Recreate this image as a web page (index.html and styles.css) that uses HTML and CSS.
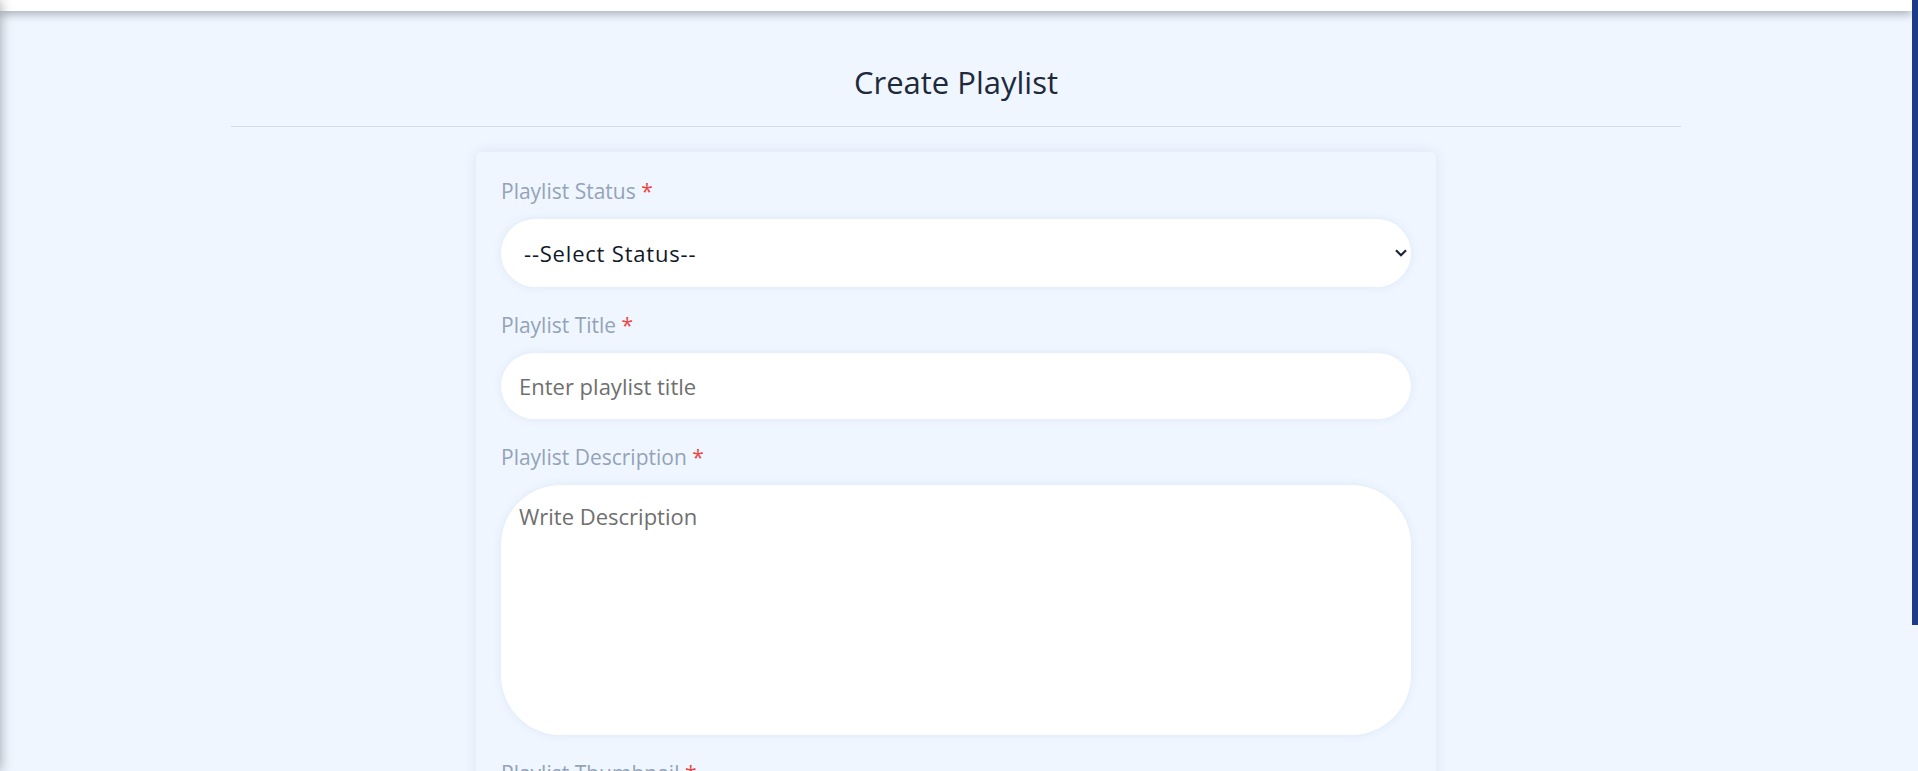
FILE: index.html
```html
<!DOCTYPE html>
<html lang="en">
<head>
<meta charset="utf-8">
<title>Create Playlist</title>
<link rel="stylesheet" href="styles.css">
</head>
<body>
<aside class="sidebar"></aside>
<div class="scroll-thumb"></div>
<header class="topbar"></header>
<main class="page">
  <div class="page-head">
    <h1 class="page-title">Create Playlist</h1>
  </div>
  <form class="card">
    <div class="field">
      <label class="field-label">Playlist Status <span class="req">*</span></label>
      <div class="select-wrap">
        <select class="control control-select">
          <option>--Select Status--</option>
          <option>Public</option>
          <option>Private</option>
        </select>
        <svg class="chevron" width="12" height="8" viewBox="0 0 12 8"><path d="M1 1.2 L6 6.2 L11 1.2" fill="none" stroke="#1e2433" stroke-width="2.2"/></svg>
      </div>
    </div>
    <div class="field">
      <label class="field-label">Playlist Title <span class="req">*</span></label>
      <input class="control control-input" type="text" placeholder="Enter playlist title">
    </div>
    <div class="field">
      <label class="field-label">Playlist Description <span class="req">*</span></label>
      <textarea class="control control-textarea" placeholder="Write Description"></textarea>
    </div>
    <div class="field">
      <label class="field-label">Playlist Thumbnail <span class="req">*</span></label>
      <input class="control control-input" type="text" placeholder="Choose file">
    </div>
  </form>
</main>
</body>
</html>
```
FILE: styles.css
```css
html {
  background: #eff6ff;
}
html::-webkit-scrollbar {
  width: 0;
  display: none;
}
body {
  margin: 0;
  padding-right: 6px;
  background: #eff6ff;
  font-family: "Open Sans", "Noto Sans", sans-serif;
  color: #1e293b;
}
.sidebar {
  position: fixed;
  top: 0;
  left: -260px;
  width: 260px;
  height: 100vh;
  background: #fff;
  box-shadow: 0 0 12px rgba(0, 0, 0, 0.35);
  z-index: 5;
}
.scroll-thumb {
  position: fixed;
  top: 0;
  right: 0;
  width: 6px;
  height: 625px;
  background: #1e3a8a;
  z-index: 6;
}
.topbar {
  height: 11px;
  background: #fff;
  box-shadow: 0 3px 10px rgba(0, 0, 0, 0.3);
  position: relative;
  z-index: 3;
}
.page {
  padding: 0 231px 30px;
}
.page-head {
  padding: 53px 0 25px;
  border-bottom: 1px solid #d5dce7;
  text-align: center;
}
.page-title {
  margin: 0;
  font-size: 31px;
  line-height: 37px;
  font-weight: 400;
  color: #1e293b;
}
.card {
  width: 960px;
  box-sizing: border-box;
  margin: 25px auto 0;
  padding: 27px 25px 25px;
  background: #eff6ff;
  border-radius: 6px;
  box-shadow: 0 0 14px rgba(30, 58, 138, 0.09);
  display: flex;
  flex-direction: column;
  gap: 26px;
}
.field {
  display: flex;
  flex-direction: column;
  gap: 16px;
}
.field-label {
  font-size: 21px;
  line-height: 24px;
  color: #94a3b8;
}
.req {
  color: #ef4444;
}
.select-wrap {
  position: relative;
}
.control {
  display: block;
  width: 100%;
  box-sizing: border-box;
  border: none;
  outline: none;
  background: #fff;
  border-radius: 999px;
  box-shadow: 0 0 10px rgba(30, 58, 138, 0.08);
  font-family: inherit;
  font-size: 22px;
  color: #1e293b;
}
.control::placeholder {
  color: #6f6f6f;
}
.control-select {
  height: 68px;
  padding: 0 40px 0 23px;
  font-size: 22px;
  letter-spacing: 0.8px;
  color: #111827;
  appearance: none;
  -webkit-appearance: none;
}
.chevron {
  position: absolute;
  right: 4px;
  top: 30px;
  pointer-events: none;
}
.control-input {
  height: 66px;
  padding: 0 18px;
}
.control-textarea {
  height: 250px;
  border-radius: 60px;
  padding: 18px 18px;
  line-height: 27px;
  resize: none;
}
```
